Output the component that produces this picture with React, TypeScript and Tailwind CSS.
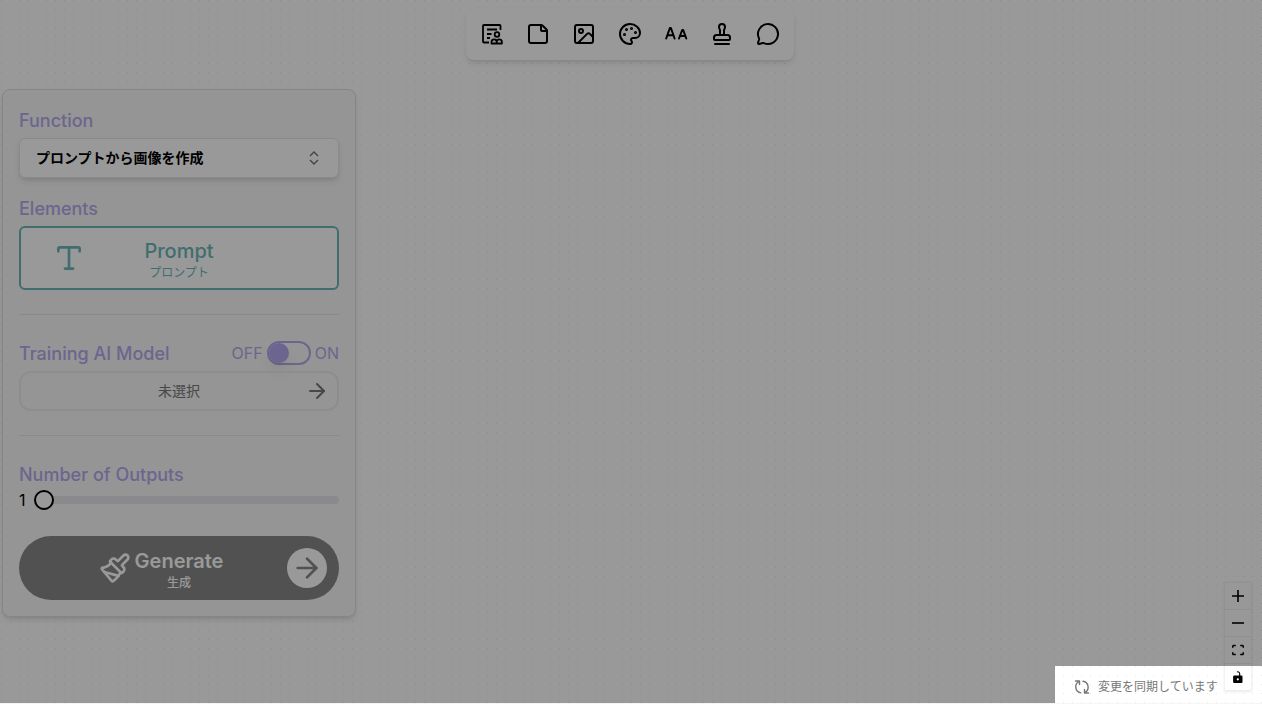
import React, { useState } from 'react';
import {
  ArrowRight, Image, MessageCircle, Paintbrush, Palette, Stamp, StickyNote, Type
} from 'lucide-react';

const NewsIcon = () => (
  <svg width="24" height="24" viewBox="0 0 24 24" fill="none" stroke="currentColor" strokeWidth="1.8" strokeLinejoin="round">
    <path d="M9 20.500H4A1 1 0 0 1 3 19.500V4A1 1 0 0 1 4 3H19.500A1 1 0 0 1 20.500 4V8" />
    <path d="M7 7.500h10M7 12h4.500M7 16h3" />
    <circle cx="17" cy="12.500" r="2.300" />
    <path d="M11.500 21.500v-1.500a2.600 2.600 0 0 1 5.200 0a2.600 2.600 0 0 1 5.200 0v1.500zM16.700 19.500v2" />
  </svg>
);

const LettersIcon = () => (
  <svg width="24" height="24" viewBox="0 0 24 24" fill="none" stroke="currentColor" strokeWidth="2" strokeLinecap="round" strokeLinejoin="round">
    <path d="M2.200 16.500 5.900 6h1l3.700 10.500M3.500 13.300h5.800" />
    <path d="M15 16.500 18.200 8h1l3.100 8.500M16.100 14h5.200" />
  </svg>
);

const SelectArrows = () => (
  <svg width="18" height="18" viewBox="0 0 18 18" fill="none" stroke="currentColor" strokeWidth="1.4" className="pointer-events-none absolute top-[11px] right-4 text-gray-500">
    <path d="M5 7l4-4 4 4M5 11l4 4 4-4" />
  </svg>
);

const SyncIcon = () => (
  <svg width="16" height="16" viewBox="0 0 16 16" fill="none" stroke="currentColor" strokeWidth="1.400" strokeLinecap="round" strokeLinejoin="round">
    <path d="M6.500 13.700A6 6 0 0 1 5 2.500M1.500 2H5.500V5.500" />
    <path d="M9 2.300A6 6 0 0 1 11 13.500M14.500 14H10.500V10.500" />
  </svg>
);

const tools = [
  { name: 'News', icon: <NewsIcon /> },
  { name: 'Note', icon: <StickyNote size={24} /> },
  { name: 'Image', icon: <Image size={24} /> },
  { name: 'Palette', icon: <Palette size={24} /> },
  { name: 'Text', icon: <LettersIcon /> },
  { name: 'Stamp', icon: <Stamp size={24} /> },
  { name: 'Comment', icon: <MessageCircle size={24} /> },
];

const zoomControls = [
  { name: 'Zoom in', icon: <path d="M32 18.133H18.133V32h-4.266V18.133H0v-4.266h13.867V0h4.266v13.867H32z" /> },
  { name: 'Zoom out', icon: <path d="M0 13.867h32v4.266H0z" /> },
  { name: 'Fit view', icon: <path d="M2 10V6a2 2 0 0 1 2-2h6M22 4h6a2 2 0 0 1 2 2v4M30 22v4a2 2 0 0 1-2 2h-6M10 28H4a2 2 0 0 1-2-2v-4" fill="none" stroke="currentColor" strokeWidth="4" /> },
  { name: 'Unlock', icon: <path d="M25 12h-3V8a7 7 0 0 0-9-7v3a4 4 0 0 1 6 4v4H6a3 3 0 0 0-3 3v14a3 3 0 0 0 3 3h19a3 3 0 0 0 3-3V15a3 3 0 0 0-3-3zm-9.500 13a3 3 0 1 1 0-6 3 3 0 0 1 0 6z" /> },
];

const Toolbar = () => (
  <div className="flex justify-center pt-2 pr-0.5">
    <div className="flex h-[52px] items-center gap-[6px] rounded-lg bg-white px-[6px] shadow-md">
      {tools.map((tool) => (
        <button key={tool.name} aria-label={tool.name} className="flex size-10 items-center justify-center rounded-md">
          {tool.icon}
        </button>
      ))}
    </div>
  </div>
);

const SidePanel = () => {
  const [training, setTraining] = useState(false);
  const [outputs, setOutputs] = useState(1);

  return (
    <aside className="mt-[29px] ml-[2px] w-[354px] rounded-lg border border-[#e0e0e0] bg-[#f8f8f8] p-4 shadow-md">
      {/* Function */}
      <label htmlFor="function" className="block pt-0.5 text-lg leading-[26px] font-medium text-[#b5a9ee]">Function</label>
      <div className="relative mt-1">
        <select
          id="function"
          className="h-10 w-full appearance-none rounded-md border border-gray-200 bg-white px-4 text-sm font-bold shadow-md"
        >
          <option>プロンプトから画像を作成</option>
        </select>
        <SelectArrows />
      </div>

      {/* Elements */}
      <h2 className="mt-4 pt-0.5 text-lg leading-[26px] font-medium text-[#b5a9ee]">Elements</h2>
      <button className="relative mt-1 flex h-16 w-full flex-col items-center justify-center rounded-md border-2 border-[#6cb8b7] bg-white pt-0.5 text-[#6cb8b7]">
        <Type size={32} className="absolute top-[14px] left-8" />
        <span className="text-xl leading-7 font-medium">Prompt</span>
        <span className="text-xs leading-4">プロンプト</span>
      </button>

      {/* Training model */}
      <div className="mt-6 flex items-center justify-between border-t border-gray-200 pt-6">
        <h2 className="pt-0.5 text-lg leading-[26px] font-medium text-[#b5a9ee]">Training AI Model</h2>
        <div className="flex items-center gap-1 text-[#b5a9ee]">
          <span>OFF</span>
          <button
            role="switch"
            aria-checked={training}
            aria-label="Training AI Model"
            onClick={() => setTraining(!training)}
            className={`flex h-6 w-11 items-center rounded-full border-2 border-[#b5a9ee] bg-[#f8f8f8] ${training ? 'justify-end' : 'justify-start'}`}
          >
            <span className="size-5 rounded-full bg-[#b5a9ee] shadow-lg" />
          </button>
          <span>ON</span>
        </div>
      </div>
      <button className="relative mt-1 flex h-10 w-full items-center justify-center rounded-xl border-2 border-[#ececec] text-sm text-[#777777]">
        未選択
        <ArrowRight size={24} className="absolute right-2" />
      </button>

      {/* Outputs */}
      <div className="mt-6 border-t border-gray-200 pt-6">
        <label htmlFor="outputs" className="block pt-0.5 text-lg leading-[26px] font-medium text-[#b5a9ee]">Number of Outputs</label>
        <div className="flex h-6 items-center gap-2">
          <span>{outputs}</span>
          <input
            id="outputs"
            type="range"
            min="1"
            max="8"
            value={outputs}
            onChange={(e) => setOutputs(Number(e.target.value))}
            className="h-2 min-w-0 flex-1 appearance-none rounded-full bg-[#e6e6ea] [&::-webkit-slider-thumb]:size-5 [&::-webkit-slider-thumb]:appearance-none [&::-webkit-slider-thumb]:rounded-full [&::-webkit-slider-thumb]:border-2 [&::-webkit-slider-thumb]:border-black [&::-webkit-slider-thumb]:bg-white"
          />
        </div>
      </div>

      <button className="relative mt-6 flex h-16 w-full flex-col items-center justify-center rounded-full bg-[#888888] pt-0.5 text-white">
        <Paintbrush size={32} className="absolute top-4 left-20" />
        <span className="text-xl leading-7 font-semibold">Generate</span>
        <span className="text-xs leading-4 font-medium">生成</span>
        <span className="absolute top-3 right-3 flex size-10 items-center justify-center rounded-full bg-white text-[#888888]">
          <ArrowRight size={32} />
        </span>
      </button>
    </aside>
  );
};

export default function App() {
  return (
    <div className="h-screen bg-[#f5f5f5] pb-px font-['Inter','Noto_Sans_CJK_JP',sans-serif] text-black">
      <div className="relative h-full overflow-hidden bg-white bg-[radial-gradient(circle,#e8e8e8_0.5px,transparent_1px)] bg-size-[9px_9px] bg-position-[-3px_-4px]">
        <Toolbar />
        <SidePanel />

        <div className="absolute right-[11px] bottom-3 z-10 flex flex-col shadow-[0_0_2px_1px_rgba(0,0,0,0.08)]">
          {zoomControls.map((control) => (
            <button key={control.name} aria-label={control.name} className="flex h-[27px] w-[26px] items-center justify-center border-b border-[#eeeeee] bg-[#fefefe]">
              <svg width="12" height="12" viewBox="0 0 32 32" fill="currentColor">{control.icon}</svg>
            </button>
          ))}
        </div>

        {/* Everything outside the status area is dimmed */}
        <div className="pointer-events-none absolute right-0 bottom-0 z-20 flex h-[37px] w-[207px] items-center gap-2 pt-1 pl-[19px] text-xs text-[#777777] shadow-[0_0_0_2000px_rgba(0,0,0,0.4)]">
          <SyncIcon />
          <span>変更を同期しています</span>
        </div>
      </div>
    </div>
  );
}
